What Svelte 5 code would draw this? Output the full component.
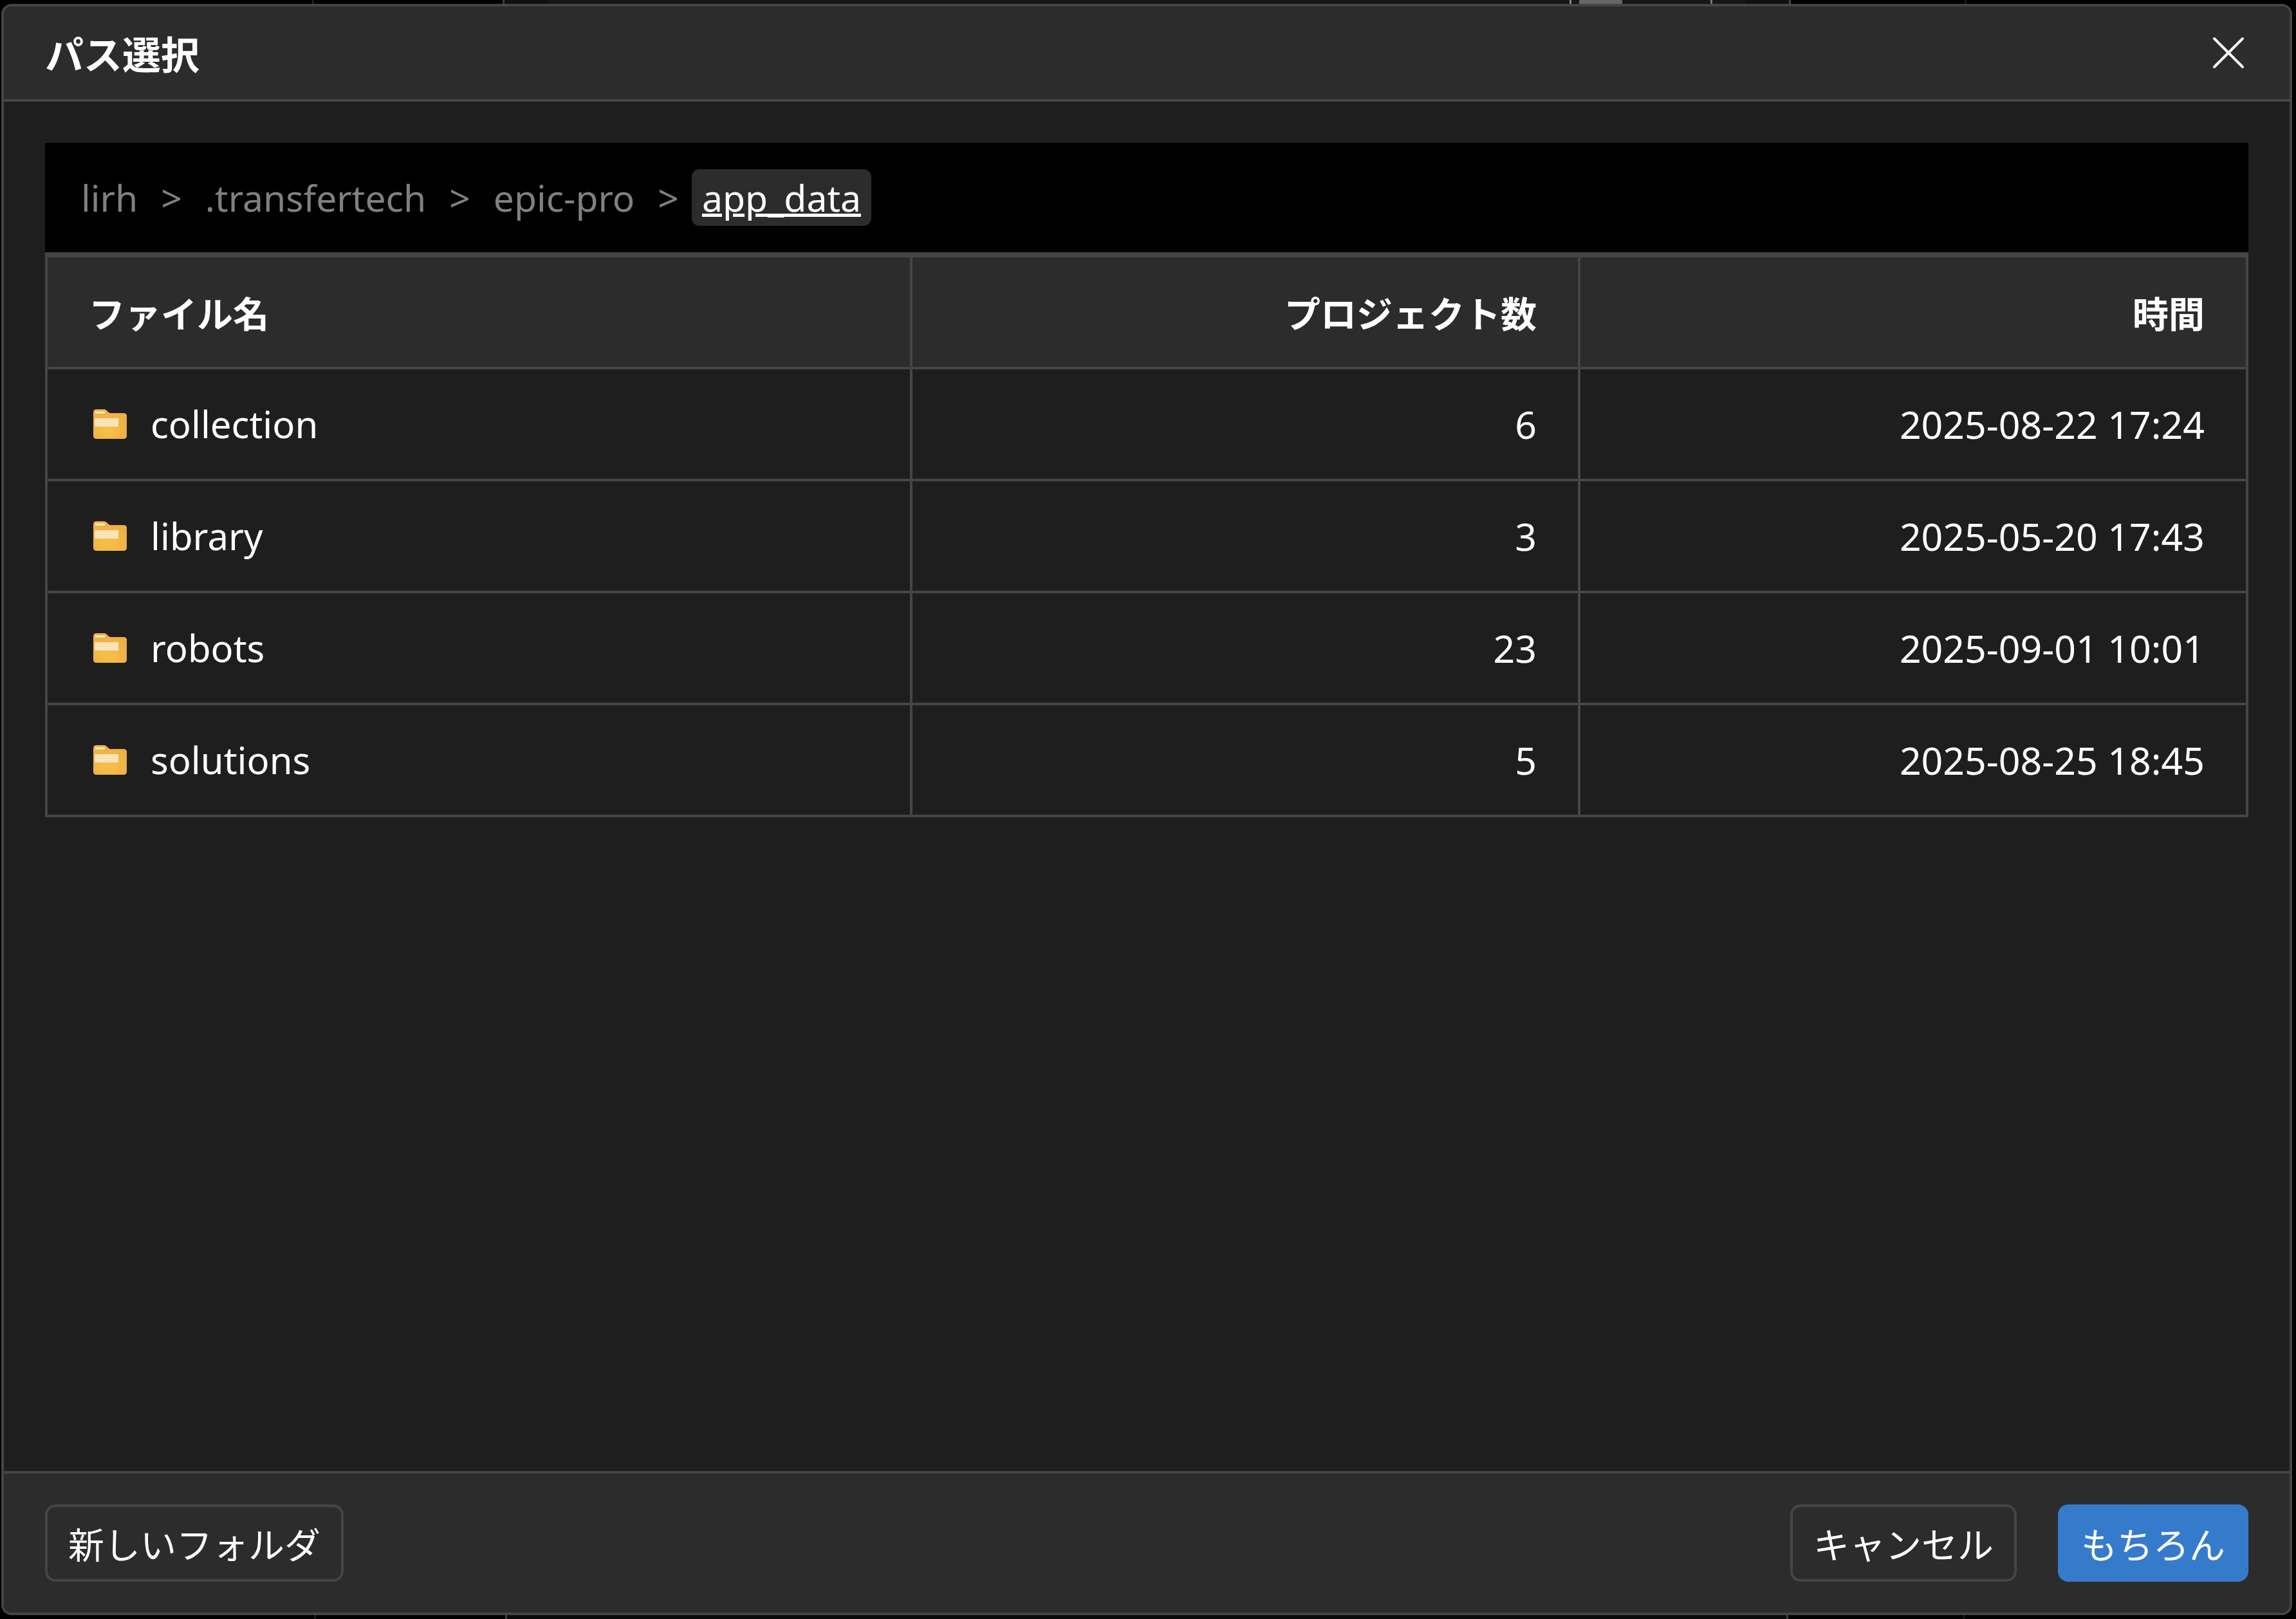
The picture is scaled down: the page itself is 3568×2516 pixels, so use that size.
<script>
	const crumbs = ['lirh', '.transfertech', 'epic-pro', 'app_data'];

	const folders = [
		{ name: 'collection', count: 6, time: '2025-08-22 17:24' },
		{ name: 'library', count: 3, time: '2025-05-20 17:43' },
		{ name: 'robots', count: 23, time: '2025-09-01 10:01' },
		{ name: 'solutions', count: 5, time: '2025-08-25 18:45' }
	];

	// Slivers of the dimmed window behind the dialog: { share of the width, fill, right edge }
	const above = [
		{ w: 490, fill: '#000', edge: '#1c1c1c' },
		{ w: 295, fill: '#000', edge: '#3c3c3c' },
		{ w: 66, fill: '#101010', edge: '#101010' },
		{ w: 1602, fill: '#161616', edge: '#8a8a8a' },
		{ w: 9, fill: '#161616', edge: '#161616' },
		{ w: 64, fill: '#666', edge: '#666' },
		{ w: 139, fill: '#161616', edge: '#777' },
		{ w: 48, fill: '#161616', edge: '#161616' },
		{ w: 69, fill: '#101010', edge: '#444' },
		{ w: 272, fill: '#000', edge: '#151515' },
		{ w: 514, fill: '#000', edge: '#000' }
	];
	const below = [
		{ w: 490, fill: '#000', edge: '#1c1c1c' },
		{ w: 295, fill: '#000', edge: '#3c3c3c' },
		{ w: 1997, fill: '#0a0a0a', edge: '#3c3c3c' },
		{ w: 272, fill: '#000', edge: '#151515' },
		{ w: 514, fill: '#000', edge: '#000' }
	];
</script>

{#snippet strip(parts)}
	<div class="strip" aria-hidden="true">
		{#each parts as p}
			<i style="flex-grow: {p.w}; background: {p.fill}; border-color: {p.edge}"></i>
		{/each}
	</div>
{/snippet}

<div class="backdrop">
	{@render strip(above)}
	<div class="dialog" role="dialog" aria-labelledby="dialog-title">
		<header>
			<h1 id="dialog-title">パス選択</h1>
			<button class="close" aria-label="閉じる">
				<svg viewBox="0 0 50 50"><path d="M3 3 47 47M47 3 3 47" /></svg>
			</button>
		</header>

		<main>
			<nav>
				{#each crumbs as crumb, i}
					{#if i > 0}<span class="sep">&gt;</span>{/if}
					<a href="#{crumb}" class:current={i === crumbs.length - 1}>{crumb}</a>
				{/each}
			</nav>
			<table>
				<thead>
					<tr>
						<th class="name">ファイル名</th>
						<th>プロジェクト数</th>
						<th>時間</th>
					</tr>
				</thead>
				<tbody>
					{#each folders as folder}
						<tr>
							<td class="name">
								<span class="folder">
									<svg viewBox="0 0 54 48" aria-hidden="true">
										<defs>
											<radialGradient id="folder-fill" cx="0.45" cy="0.7" r="0.6">
												<stop offset="0" stop-color="#f6c14a" />
												<stop offset="1" stop-color="#f0b043" />
											</radialGradient>
										</defs>
										<path d="M1 6Q1 1 6 1H18C22 1 24 7 28 7H48Q53 7 53 12V42Q53 47 48 47H6Q1 47 1 42Z" fill="url(#folder-fill)" />
										<path d="M4 6H19" stroke="#fff3d6" stroke-width="3" />
										<path d="M3 15H40V28H3Z" fill="#f9e3b9" />
									</svg>
									{folder.name}
								</span>
							</td>
							<td>{folder.count}</td>
							<td>{folder.time}</td>
						</tr>
					{/each}
				</tbody>
			</table>
		</main>

		<footer>
			<button class="btn">新しいフォルダ</button>
			<div class="actions">
				<button class="btn">キャンセル</button>
				<button class="btn primary">もちろん</button>
			</div>
		</footer>
	</div>
	{@render strip(below)}
</div>

<style>
	:global(body) { background: #000; }
	.backdrop { min-height: 100vh; display: flex; flex-direction: column; background: #000; color: #fff; font-family: "Noto Sans", "Noto Sans CJK JP", sans-serif; font-size: 56px; line-height: 76px; }
	.strip { display: flex; height: 6px; }
	.strip i { flex: 1 1 0; box-sizing: border-box; border-right: 3px solid; }
	.dialog { flex: 1; display: flex; flex-direction: column; margin: 0 6px 0 2px; border: 4px solid #454545; border-radius: 16px; background: #1e1e1e; overflow: hidden; }
	header { display: flex; align-items: center; justify-content: space-between; padding: 0 64px; height: 144px; background: #2c2c2c; border-bottom: 4px solid #454545; }
	h1 { margin: 0; padding-top: 6px; font-size: 60px; font-weight: 700; }
	.close { display: flex; padding: 6px; border: 0; background: none; cursor: pointer; }
	.close svg { width: 50px; height: 50px; fill: none; stroke: #fff; stroke-width: 4; stroke-linecap: round; }
	main { flex: 1; padding: 64px; }
	nav { display: flex; align-items: center; gap: 20px; height: 170px; padding: 0 40px; background: #000; color: #808080; font-size: 57px; }
	nav a { padding: 6px 16px; border-radius: 12px; color: inherit; text-decoration: none; }
	nav a.current { background: #2c2c2c; color: #fff; text-decoration: underline; }
	table { width: 100%; border-collapse: collapse; table-layout: fixed; border: 4px solid #454545; border-top-width: 8px; }
	th, td { height: 174px; box-sizing: border-box; padding: 0 64px; border: 4px solid #454545; text-align: right; }
	th { height: 176px; padding-top: 4px; background: #2c2c2c; font-weight: 700; }
	td { font-size: 59px; }
	.name { width: 39.3%; text-align: left; }
	td.name { font-size: 58px; }
	.folder { display: flex; align-items: center; gap: 36px; padding-left: 6px; }
	.folder svg { width: 54px; height: 48px; }
	footer { display: flex; align-items: center; justify-content: space-between; height: 216px; padding: 0 64px; background: #2c2c2c; border-top: 4px solid #454545; }
	.actions { display: flex; gap: 64px; }
	.btn { height: 120px; padding: 4px 32px 0; border: 4px solid #454545; border-radius: 16px; background: #2c2c2c; color: #fff; font: inherit; cursor: pointer; }
	.btn.primary { background: #367bcb; border-color: #367bcb; }
</style>
